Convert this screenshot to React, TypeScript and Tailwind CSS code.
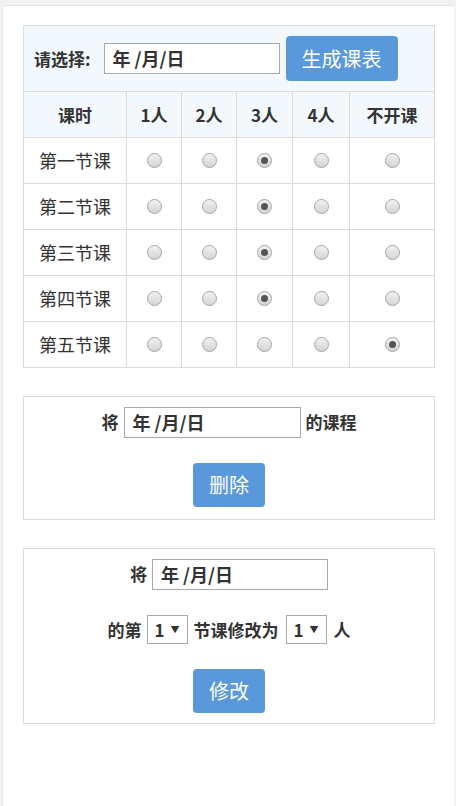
import React from "react";

const font = { fontFamily: '"Noto Sans CJK SC", "Noto Sans", sans-serif' };

function Radio({ checked }: { checked?: boolean }) {
  return (
    <div className="flex items-center justify-center">
      <span className="flex h-[15px] w-[15px] items-center justify-center rounded-full border border-[#a6a6a6] bg-gradient-to-b from-[#f2f2f2] to-[#d4d4d4]">
        {checked && <span className="h-[7px] w-[7px] rounded-full bg-[#555]" />}
      </span>
    </div>
  );
}

function DateInput({ w }: { w: string }) {
  return (
    <div className={`flex h-[31px] items-center border border-[#a9a9a9] bg-white pl-[8px] text-[18px] font-bold text-[#333] ${w}`}>
      年 /月/日
    </div>
  );
}

function Select() {
  return (
    <div className="flex h-[29px] w-[41px] items-center gap-[6px] border border-[#a9a9a9] bg-white pl-[7px] text-[17px] font-bold text-[#333]">
      <span>1</span>
      <span className="text-[9px]">▼</span>
    </div>
  );
}

const rows = [
  { name: "第一节课", sel: 2 },
  { name: "第二节课", sel: 2 },
  { name: "第三节课", sel: 2 },
  { name: "第四节课", sel: 2 },
  { name: "第五节课", sel: 4 },
];

export default function App() {
  return (
    <div className="min-h-[806px] bg-[#f2f2f2] pl-[2px] pr-[2px] pt-[5px]" style={font}>
      <div className="min-h-[801px] w-[452px] border-l border-t border-[#e6e6e6] bg-white px-[20px] pt-[19px] text-[#333]">
        <table className="w-[412px] border-collapse border border-[#dcdcdc]">
          <tbody>
            <tr className="bg-[#f3f8fd]">
              <td colSpan={6} className="h-[66px] border border-[#dcdcdc] px-[10px]">
                <div className="flex items-center">
                  <span className="text-[17px] font-bold">请选择:</span>
                  <span className="ml-[13px]"><DateInput w="w-[176px]" /></span>
                  <button className="ml-[6px] h-[45px] w-[112px] rounded-[4px] bg-[#5a98dc] text-[20px] text-white">生成课表</button>
                </div>
              </td>
            </tr>
            <tr className="bg-[#f3f8fd] text-[17px] font-bold">
              <td className="h-[46px] w-[103px] border border-[#dcdcdc] text-center">课时</td>
              <td className="w-[55px] border border-[#dcdcdc] text-center">1人</td>
              <td className="w-[55px] border border-[#dcdcdc] text-center">2人</td>
              <td className="w-[56px] border border-[#dcdcdc] text-center">3人</td>
              <td className="w-[57px] border border-[#dcdcdc] text-center">4人</td>
              <td className="border border-[#dcdcdc] text-center">不开课</td>
            </tr>
            {rows.map((r) => (
              <tr key={r.name}>
                <td className="h-[46px] border border-[#dcdcdc] text-center text-[18px]">{r.name}</td>
                {[0, 1, 2, 3, 4].map((i) => (
                  <td key={i} className="border border-[#dcdcdc] text-center">
                    <Radio checked={r.sel === i} />
                  </td>
                ))}
              </tr>
            ))}
          </tbody>
        </table>

        <div className="mt-[28px] flex w-[412px] flex-col items-center border border-[#dcdcdc] pb-[12px] pt-[10px]">
          <div className="flex items-start text-[17px] font-bold">
            <span className="mr-[5px] mt-[2px]">将</span>
            <DateInput w="w-[177px]" />
            <span className="ml-[5px] mt-[2px]">的课程</span>
          </div>
          <button className="mt-[25px] h-[44px] w-[72px] rounded-[4px] bg-[#5a98dc] text-[20px] text-white">删除</button>
        </div>

        <div className="mt-[28px] flex w-[412px] flex-col items-center border border-[#dcdcdc] pb-[10px] pt-[10px]">
          <div className="flex items-start text-[17px] font-bold">
            <span className="mr-[5px] mt-[2px]">将</span>
            <DateInput w="w-[176px]" />
          </div>
          <div className="mt-[25px] flex items-center gap-[5px] text-[17px] font-bold">
            <span>的第</span>
            <Select />
            <span className="ml-[1px] mr-[2px]">节课修改为</span>
            <Select />
            <span className="ml-[2px]">人</span>
          </div>
          <button className="mt-[25px] h-[44px] w-[72px] rounded-[4px] bg-[#5a98dc] text-[20px] text-white">修改</button>
        </div>
      </div>
    </div>
  );
}
